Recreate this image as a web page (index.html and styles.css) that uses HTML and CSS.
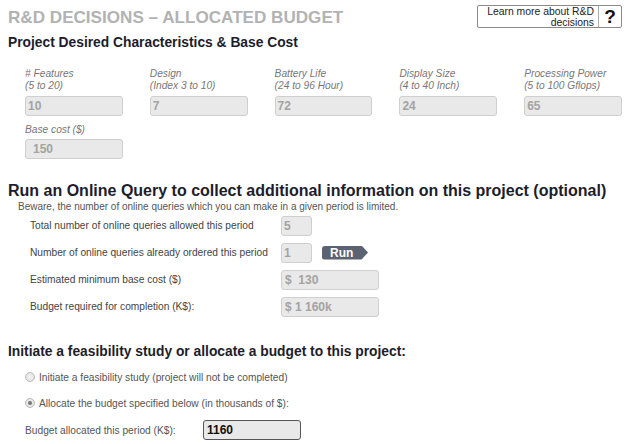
FILE: index.html
```html
<!DOCTYPE html>
<html>
<head>
<meta charset="utf-8">
<link rel="stylesheet" href="styles.css">
</head>
<body>
<div class="page">
  <div class="top">
    <h1 class="title">R&amp;D DECISIONS – ALLOCATED BUDGET</h1>
    <div class="learn">
      <span class="learn-text">Learn more about R&amp;D<br>decisions</span>
      <span class="learn-q">?</span>
    </div>
  </div>

  <h2 class="sec sec1">Project Desired Characteristics &amp; Base Cost</h2>
  <div class="chars">
    <div class="field">
      <div class="flabel"># Features<br>(5 to 20)</div>
      <div class="box">10</div>
    </div>
    <div class="field">
      <div class="flabel">Design<br>(Index 3 to 10)</div>
      <div class="box">7</div>
    </div>
    <div class="field">
      <div class="flabel">Battery Life<br>(24 to 96 Hour)</div>
      <div class="box">72</div>
    </div>
    <div class="field">
      <div class="flabel">Display Size<br>(4 to 40 Inch)</div>
      <div class="box">24</div>
    </div>
    <div class="field">
      <div class="flabel">Processing Power<br>(5 to 100 Gflops)</div>
      <div class="box">65</div>
    </div>
  </div>
  <div class="field basecost">
    <div class="flabel">Base cost ($)</div>
    <div class="box box-ind">150</div>
  </div>

  <h2 class="sec sec2">Run an Online Query to collect additional information on this project (optional)</h2>
  <p class="beware">Beware, the number of online queries which you can make in a given period is limited.</p>
  <div class="qrows">
    <div class="qrow">
      <span class="qlabel">Total number of online queries allowed this period</span>
      <span class="box small">5</span>
    </div>
    <div class="qrow">
      <span class="qlabel">Number of online queries already ordered this period</span>
      <span class="box small">1</span>
      <span class="run">Run</span>
    </div>
    <div class="qrow">
      <span class="qlabel">Estimated minimum base cost ($)</span>
      <span class="box wide">$&nbsp; 130</span>
    </div>
    <div class="qrow">
      <span class="qlabel">Budget required for completion (K$):</span>
      <span class="box wide">$ 1 160k</span>
    </div>
  </div>

  <h2 class="sec sec3">Initiate a feasibility study or allocate a budget to this project:</h2>
  <div class="radios">
    <div class="radio"><span class="dot"></span>Initiate a feasibility study (project will not be completed)</div>
    <div class="radio"><span class="dot on"></span>Allocate the budget specified below (in thousands of $):</div>
  </div>
  <div class="alloc">
    <span class="alabel">Budget allocated this period (K$):</span>
    <span class="box abox">1160</span>
  </div>
</div>
</body>
</html>
```
FILE: styles.css
```css
* { box-sizing: border-box; }
html, body { margin: 0; padding: 0; background: #fff; }
body { font-family: "Liberation Sans", Arial, sans-serif; color: #333; }
.page { width: 627px; height: 444px; padding: 5px 5px 0 8px; overflow: hidden; }

.top { display: flex; justify-content: space-between; align-items: flex-start; height: 30px; }
.title { margin: 3px 0 0 0; font-size: 17.1px; font-weight: bold; color: #b2b2b2; white-space: nowrap; }
.learn { display: flex; width: 145px; height: 23px; border: 1px solid #8a8a8a; border-radius: 2px; background: #fff; }
.learn-text { flex: 1; text-align: right; font-size: 10.4px; line-height: 11px; padding: 0 4px 0 0; color: #222; white-space: nowrap; }
.learn-q { width: 23px; border-left: 1px solid #aaa; font-size: 19px; font-weight: bold; text-align: center; line-height: 22px; color: #111; }

.sec { margin: 0; font-weight: bold; color: #1d1d2b; white-space: nowrap; }
.sec1 { font-size: 13.8px; margin-top: 0; height: 25px; }
.chars { display: flex; padding-left: 17px; gap: 27px; margin-top: 8px; }
.field { width: 98px; }
.flabel { font-style: italic; font-size: 10.2px; line-height: 12px; color: #777; white-space: nowrap; }
.box { display: block; height: 20px; background: #e9e9e9; border: 1px solid #cfcfcf; border-radius: 3px; font-size: 12px; font-weight: bold; color: #a3a3a3; line-height: 18px; padding-left: 2px; }
.field .box { margin-top: 4px; }
.box-ind { padding-left: 7px; }
.basecost { margin-left: 17px; margin-top: 8px; }
.basecost .box { margin-top: 3px; }

.sec2 { font-size: 16px; margin-top: 23px; }
.beware { margin: 1px 0 0 10px; font-size: 10px; color: #555; }
.qrows { margin-left: 22px; margin-top: 0; }
.qrow { display: flex; align-items: center; height: 27px; }
.qlabel { width: 251px; font-size: 10.2px; color: #444; white-space: nowrap; }
.box.small { width: 31px; }
.box.wide { width: 98px; padding-left: 3px; }
.run { margin-left: 10px; width: 46px; height: 14px; background: #5b6271; color: #fff; font-size: 12px; font-weight: bold; line-height: 14px; padding-left: 8px; clip-path: polygon(0 0, 86% 0, 100% 50%, 86% 100%, 0 100%); border-radius: 3px 0 0 3px; }

.sec3 { font-size: 13.8px; margin-top: 24px; }
.radios { margin-left: 17px; margin-top: 5px; }
.radio { display: flex; align-items: center; font-size: 10.2px; color: #555; height: 26px; }
.dot { width: 10px; height: 10px; border-radius: 50%; border: 1px solid #bbb; background: radial-gradient(circle, #f4f4f4 0, #dcdcdc 100%); margin-right: 4px; position: relative; }
.dot.on::after { content: ""; position: absolute; left: 2px; top: 2px; width: 4px; height: 4px; border-radius: 50%; background: #777; }
.alloc { display: flex; align-items: center; margin-left: 17px; margin-top: 4px; }
.alabel { width: 178px; font-size: 10.2px; color: #555; }
.box.abox { width: 98px; border: 1px solid #555; color: #111; font-size: 12px; padding-left: 3px; }
```
